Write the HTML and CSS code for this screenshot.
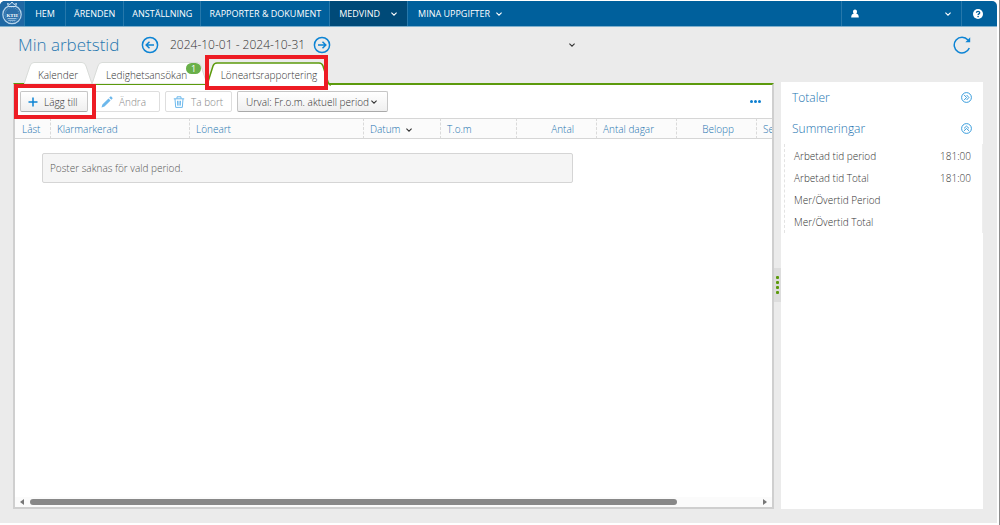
FILE: index.html
```
<!DOCTYPE html>
<html lang="sv">
<head>
<meta charset="utf-8">
<title>Min arbetstid</title>
<link rel="stylesheet" href="styles.css">
</head>
<body>
<svg class="defs" aria-hidden="true">
  <symbol id="chevron" viewBox="0 0 8 8"><path d="M1.400 2.700 4 5.200 6.600 2.700" fill="none" stroke="currentColor" stroke-width="1.100"/></symbol>
</svg>
<div class="app">
  <header class="topbar">
    <a class="logo" href="#" aria-label="KTH">
      <svg width="24" height="24" viewBox="0 0 24 24">
        <circle cx="12" cy="13.500" r="9.200" fill="#2c6fa9" stroke="#b5d3ea" stroke-width="1.200"/>
        <circle cx="12" cy="13.500" r="7" fill="none" stroke="#77a9d2" stroke-width=".8" stroke-dasharray="1 1"/>
        <path d="M8.500 5.500 7.500 2.500 10 3.500 12 1 14 3.500 16.500 2.500 15.500 5.500Z" fill="#2c6fa9" stroke="#cfe3f3" stroke-width="1"/>
        <path d="M7.500 17.500h9M8.500 19.300h7" stroke="#a8cbe6" stroke-width=".9"/>
        <text x="12" y="15.600" text-anchor="middle" class="logo-text">KTH</text>
      </svg>
    </a>
    <nav class="menu">
      <a href="#">HEM</a>
      <a href="#">ÄRENDEN</a>
      <a href="#">ANSTÄLLNING</a>
      <a href="#">RAPPORTER &amp; DOKUMENT</a>
      <a href="#" class="current">MEDVIND <svg class="chev"><use href="#chevron"/></svg></a>
      <a href="#" class="last">MINA UPPGIFTER <svg class="chev"><use href="#chevron"/></svg></a>
    </nav>
    <button class="user" aria-label="Användare">
      <svg width="8" height="9" viewBox="0 0 8 9"><path d="M4 .5C5.400.5 6 1.500 6 2.700c0 .9-.3 1.600-.8 2C7 5 7.800 6 7.800 8.500H.2C.2 6 1 5 2.800 4.700 2.300 4.300 2 3.600 2 2.700 2 1.500 2.600.5 4 .5Z" fill="#fff"/></svg>
      <svg class="chev"><use href="#chevron"/></svg>
    </button>
    <button class="help" aria-label="Hjälp">
      <svg width="10" height="10" viewBox="0 0 10 10"><circle cx="5" cy="5" r="5" fill="#fff"/><path d="M3.400 3.700C3.500 2.700 4.200 2.300 5 2.300c1 0 1.700.6 1.700 1.400C6.700 4.900 5.100 4.800 5.100 6" fill="none" stroke="#00609c" stroke-width="1.300"/><rect x="4.400" y="6.900" width="1.400" height="1.300" fill="#00609c"/></svg>
    </button>
  </header>

  <div class="titlebar">
    <h1>Min arbetstid</h1>
    <button class="icon-btn" aria-label="Föregående period">
      <svg width="18" height="18" viewBox="0 0 18 18" fill="none" stroke="#0d84d4" stroke-width="1.500"><circle cx="9" cy="9" r="7.600"/><path d="M13 9H5.500M8.500 5.800 5.200 9l3.300 3.200"/></svg>
    </button>
    <span class="period">2024-10-01 - 2024-10-31</span>
    <button class="icon-btn" aria-label="Nästa period">
      <svg width="18" height="18" viewBox="0 0 18 18" fill="none" stroke="#0d84d4" stroke-width="1.500"><circle cx="9" cy="9" r="7.600"/><path d="M5 9h7.500M9.500 5.800 12.800 9l-3.300 3.200"/></svg>
    </button>
    <button class="icon-btn expand" aria-label="Visa mer"><svg class="chev"><use href="#chevron"/></svg></button>
    <button class="icon-btn refresh" aria-label="Uppdatera">
      <svg width="18" height="18" viewBox="0 0 18 18"><path d="M15 4.100A7.800 7.800 0 1 0 16.300 12" fill="none" stroke="#0d84d4" stroke-width="1.500"/><path d="M17.200 1.200V6.200H12.400Z" fill="#0d84d4"/></svg>
    </button>
  </div>

  <div class="content">
    <main class="main">
      <div class="tabs" role="tablist">
        <button class="tab tab-first" role="tab">
          <svg class="tab-shape" width="68" height="22" viewBox="0 0 68 22"><path d="M0 22 6 4Q7 .5 10 .5H58Q61 .5 62 4L68 22Z" fill="#fff" stroke="#d9dcd9"/></svg>
          <span>Kalender</span>
        </button>
        <button class="tab tab-second" role="tab">
          <svg class="tab-shape" width="115" height="22" viewBox="0 0 115 22"><path d="M0 22 6 4Q7 .5 10 .5H105Q108 .5 109 4L115 22Z" fill="#fff" stroke="#d9dcd9"/></svg>
          <span>Ledighetsansökan</span>
          <span class="count">1</span>
        </button>
        <button class="tab tab-active" role="tab" aria-selected="true">
          <svg class="tab-shape" width="124" height="24" viewBox="0 0 124 24"><path d="M0 24 6 4Q7 1 10 1H112Q115 1 116 4L121 20Q122 23 124 23V24Z" fill="#fff"/><path d="M0 23 6 4Q7 1 10 1H112Q115 1 116 4L121 20Q122 23 124 23" fill="none" stroke="#5c9a0c" stroke-width="1.500"/></svg>
          <span>Löneartsrapportering</span>
          <i class="mark mark-tab"></i>
        </button>
      </div>
      <section class="panel">
        <div class="toolbar">
          <button class="btn btn-add">
            <svg width="10" height="10" viewBox="0 0 10 10"><path d="M5 .5v9M.5 5h9" stroke="#0d84d4" stroke-width="1.500"/></svg>Lägg till
            <i class="mark mark-add"></i>
          </button>
          <button class="btn btn-edit" disabled>
            <svg width="12" height="12" viewBox="0 0 12 12"><path d="M.5 11.500 1.400 8.500 7.500 2.400 9.600 4.500 3.500 10.600ZM8.200 1.700 9.300.6Q9.800.2 10.300.6L11.400 1.700Q11.800 2.200 11.400 2.700L10.300 3.800Z" fill="#6cb8ec"/></svg>Ändra
          </button>
          <button class="btn btn-delete" disabled>
            <svg width="12" height="12" viewBox="0 0 12 12" fill="none" stroke="#6cb8ec"><path d="M.8 2.800h10.400M4 2.500V.8h4v1.700M2 3l.7 8.400h6.600L10 3M4.500 4.800l.2 4.800M6 4.800v4.800M7.500 4.800l-.2 4.800"/></svg>Ta bort
          </button>
          <button class="btn btn-filter">Urval: Fr.o.m. aktuell period <svg class="chev"><use href="#chevron"/></svg></button>
          <button class="more" aria-label="Fler val"><i></i><i></i><i></i></button>
        </div>
        <div class="grid">
          <table>
            <colgroup><col class="c-locked"><col class="c-done"><col class="c-type"><col class="c-date"><col class="c-to"><col class="c-num"><col class="c-num"><col class="c-num"><col class="c-rest"></colgroup>
            <thead>
              <tr><th>Låst</th><th>Klarmarkerad</th><th>Löneart</th><th>Datum <svg class="chev"><use href="#chevron"/></svg></th><th>T.o.m</th><th class="num">Antal</th><th>Antal dagar</th><th class="num">Belopp</th><th>Se</th></tr>
            </thead>
            <tbody>
              <tr><td colspan="9"><p class="empty">Poster saknas för vald period.</p></td></tr>
            </tbody>
          </table>
        </div>
        <div class="scroll">
          <svg width="4" height="6" viewBox="0 0 4 6"><path d="M4 0v6L0 3Z" fill="#777"/></svg>
          <div class="track"><div class="thumb"></div></div>
          <svg width="4" height="6" viewBox="0 0 4 6"><path d="M0 0v6L4 3Z" fill="#777"/></svg>
        </div>
      </section>
    </main>
    <div class="splitter"><div class="grip"><i></i><i></i><i></i><i></i></div></div>
    <aside class="side">
      <div class="side-head"><h2>Totaler</h2>
        <button class="icon-btn" aria-label="Visa totaler"><svg width="11" height="11" viewBox="0 0 11 11" fill="none" stroke="#2492d8" stroke-width=".9"><circle cx="5.500" cy="5.500" r="4.900"/><path d="M3.200 3 5.500 5.500 3.200 8M5.600 3 7.900 5.500 5.600 8"/></svg></button>
      </div>
      <div class="side-head"><h2>Summeringar</h2>
        <button class="icon-btn" aria-label="Dölj summeringar"><svg width="11" height="11" viewBox="0 0 11 11" fill="none" stroke="#2492d8" stroke-width=".9"><circle cx="5.500" cy="5.500" r="4.900"/><path d="M3 5.400 5.500 3.100 8 5.400M3 7.800 5.500 5.500 8 7.800"/></svg></button>
      </div>
      <dl class="sums">
        <div><dt>Arbetad tid period</dt><dd>181:00</dd></div>
        <div><dt>Arbetad tid Total</dt><dd>181:00</dd></div>
        <div><dt>Mer/Övertid Period</dt><dd></dd></div>
        <div><dt>Mer/Övertid Total</dt><dd></dd></div>
      </dl>
    </aside>
  </div>
</div>
</body>
</html>
```
FILE: styles.css
```
* { box-sizing: border-box; }
body {
  margin: 0;
  min-height: 100vh;
  display: flex;
  padding: 1px 0 2px;
  background: #fff;
  border-right: 1px solid #8c8c8c;
  font: 300 10px/14px "Open Sans", "Noto Sans", sans-serif;
  color: #333;
}
button {
  margin: 0;
  padding: 0;
  border: 0;
  background: none;
  font: inherit;
  color: inherit;
  white-space: nowrap;
}
a { color: inherit; text-decoration: none; }
h1, h2, p, dl, dd { margin: 0; font-weight: 300; }
.defs { position: absolute; width: 0; height: 0; }
.chev { width: 8px; height: 8px; flex: none; }

.app {
  flex: 1;
  display: flex;
  flex-direction: column;
  margin-right: 2px;
  background: #ebebeb;
  border-radius: 5px 5px 0 0;
}

.topbar {
  display: flex;
  height: 26px;
  background: #00609c;
  border-bottom: 1px solid #7fb0cd;
  border-radius: 5px 5px 0 0;
  color: #fff;
  font-size: 9px;
  font-weight: 400;
}
.logo {
  width: 25px;
  border-right: 1px solid #2678ab;
  background: #1f68a4;
  border-radius: 5px 0 0 0;
}
.logo svg { display: block; }
.logo-text { font: 700 5px "Liberation Serif", serif; fill: #fff; }
.menu { display: flex; flex: 1; }
.menu a {
  display: flex;
  align-items: center;
  justify-content: center;
  gap: 10px;
  min-width: 41px;
  padding: 0 8px;
  border-right: 1px solid #2678ab;
  white-space: nowrap;
}
.menu .current { background: #004a78; padding: 0 9px; }
.menu .last { border: 0; gap: 5px; padding: 0 10px; }
.user {
  display: flex;
  align-items: center;
  justify-content: space-between;
  width: 120px;
  padding: 0 9px;
  border-left: 1px solid #2678ab;
}
.help {
  width: 36px;
  border-left: 1px solid #2678ab;
  display: flex;
  align-items: center;
  padding-left: 11px;
}

.titlebar {
  display: flex;
  align-items: center;
  height: 35px;
  padding: 0 26px 0 18px;
}
.titlebar h1 { width: 123px; font-size: 17px; line-height: 24px; color: #2878b0; }
.icon-btn { display: flex; }
.period { padding: 0 8px 0 11px; font-size: 12px; line-height: 16px; }
.expand { flex: 1; justify-content: flex-start; padding-left: 237px; color: #333; }

.content { flex: 1; display: flex; padding: 0 14px 14px 13px; }
.main { flex: 1; min-width: 0; display: flex; flex-direction: column; }
.tabs { display: flex; height: 21px; padding-left: 11px; }
.tab {
  position: relative;
  display: flex;
  justify-content: center;
  align-items: flex-start;
  padding-top: 6px;
}
.tab-first { width: 68px; }
.tab-second { width: 115px; }
.tab-second span:not(.count) { margin-right: 6px; }
.tab-active { width: 124px; z-index: 1; }
.tab span { position: relative; }
.tab-shape { position: absolute; left: 0; top: 0; }
.tab .count {
  position: absolute;
  top: 1px;
  right: 6px;
  width: 15px;
  height: 11px;
  border-radius: 6px;
  background: #6ab04a;
  color: #fff;
  font-size: 9px;
  font-weight: 400;
  line-height: 11px;
}
.mark { position: absolute; border: 4px solid #ed1c24; pointer-events: none; }
.mark-tab { top: -7px; left: -2px; width: 123px; height: 35px; }
.mark-add { top: -8px; left: -7px; width: 82px; height: 35px; }

.panel {
  flex: 1;
  display: flex;
  flex-direction: column;
  border: 2px solid #cfcfcf;
  border-top-color: #5c9a0c;
  background: #fff;
}
.toolbar {
  display: flex;
  align-items: center;
  height: 33px;
  padding: 0 11px 0 5px;
}
.btn {
  position: relative;
  display: flex;
  align-items: center;
  height: 21px;
  border: 1px solid #c6c6c6;
  border-bottom-color: #aaa;
  border-radius: 2px;
  background: linear-gradient(#fff, #efefef);
  padding: 0 7px;
}
.btn-add { width: 68px; gap: 6px; margin-right: 5px; z-index: 1; }
.btn-edit { width: 67px; gap: 6px; margin-right: 5px; }
.btn-delete { width: 67px; gap: 6px; margin-right: 5px; }
.btn:disabled { background: #fff; border-color: #dedede; color: #888; }
.btn-filter { gap: 1px; width: 151px; padding-left: 8px; }
.more { display: flex; gap: 1px; margin-left: auto; }
.more i { width: 3px; height: 3px; border-radius: 50%; background: #0d7fd0; }

.grid { flex: 1; overflow: hidden; }
table { width: 100%; min-width: 757px; table-layout: fixed; border-collapse: separate; border-spacing: 0; }
.c-locked { width: 35px; }
.c-done { width: 139px; }
.c-type { width: 174px; }
.c-date { width: 77px; }
.c-to { width: 76px; }
.c-num { width: 80px; }
th {
  height: 21px;
  padding: 0 0 0 7px;
  border: 1px solid #d6d6d6;
  border-width: 1px 0;
  background: #fbfbfb;
  color: #2474b0;
  font-weight: 300;
  text-align: left;
  white-space: nowrap;
  overflow: hidden;
}
th + th { border-left: 1px dashed #dadada; padding-left: 6px; }
th.num { text-align: right; padding-right: 22px; }
th .chev { margin-left: 2px; color: #333; vertical-align: middle; }
td { padding: 14px 0 0 27px; }
.empty {
  width: 531px;
  padding: 7px;
  border: 1px solid #d5d5d5;
  border-radius: 2px;
  background: #f5f5f5;
  color: #555;
}
.scroll { display: flex; align-items: center; gap: 6px; height: 10px; padding: 0 5px; background: #fbfbfb; }
.track { flex: 1; }
.thumb { width: 89%; height: 6px; border-radius: 3px; background: #888; }

.splitter { width: 7px; display: flex; align-items: center; padding-bottom: 23px; margin-top: 21px; }
.grip {
  width: 7px;
  height: 34px;
  display: flex;
  flex-direction: column;
  justify-content: center;
  align-items: center;
  gap: 2px;
  background: #ddd;
}
.grip i { width: 3px; height: 3px; border-radius: 1px; background: #5c9a0c; }

.side { width: 202px; margin-top: 20px; background: #fff; }
.side-head { display: flex; justify-content: space-between; align-items: center; height: 31px; padding: 0 11px; }
.side-head h2 { font-size: 12px; line-height: 16px; color: #2474b0; }
.sums { margin-left: 3px; padding: 1px 11px 0 9px; border-left: 1px dashed #e3e3e3; border-right: 1px solid #eee; }
.sums div { display: flex; justify-content: space-between; align-items: center; height: 22px; }
```
